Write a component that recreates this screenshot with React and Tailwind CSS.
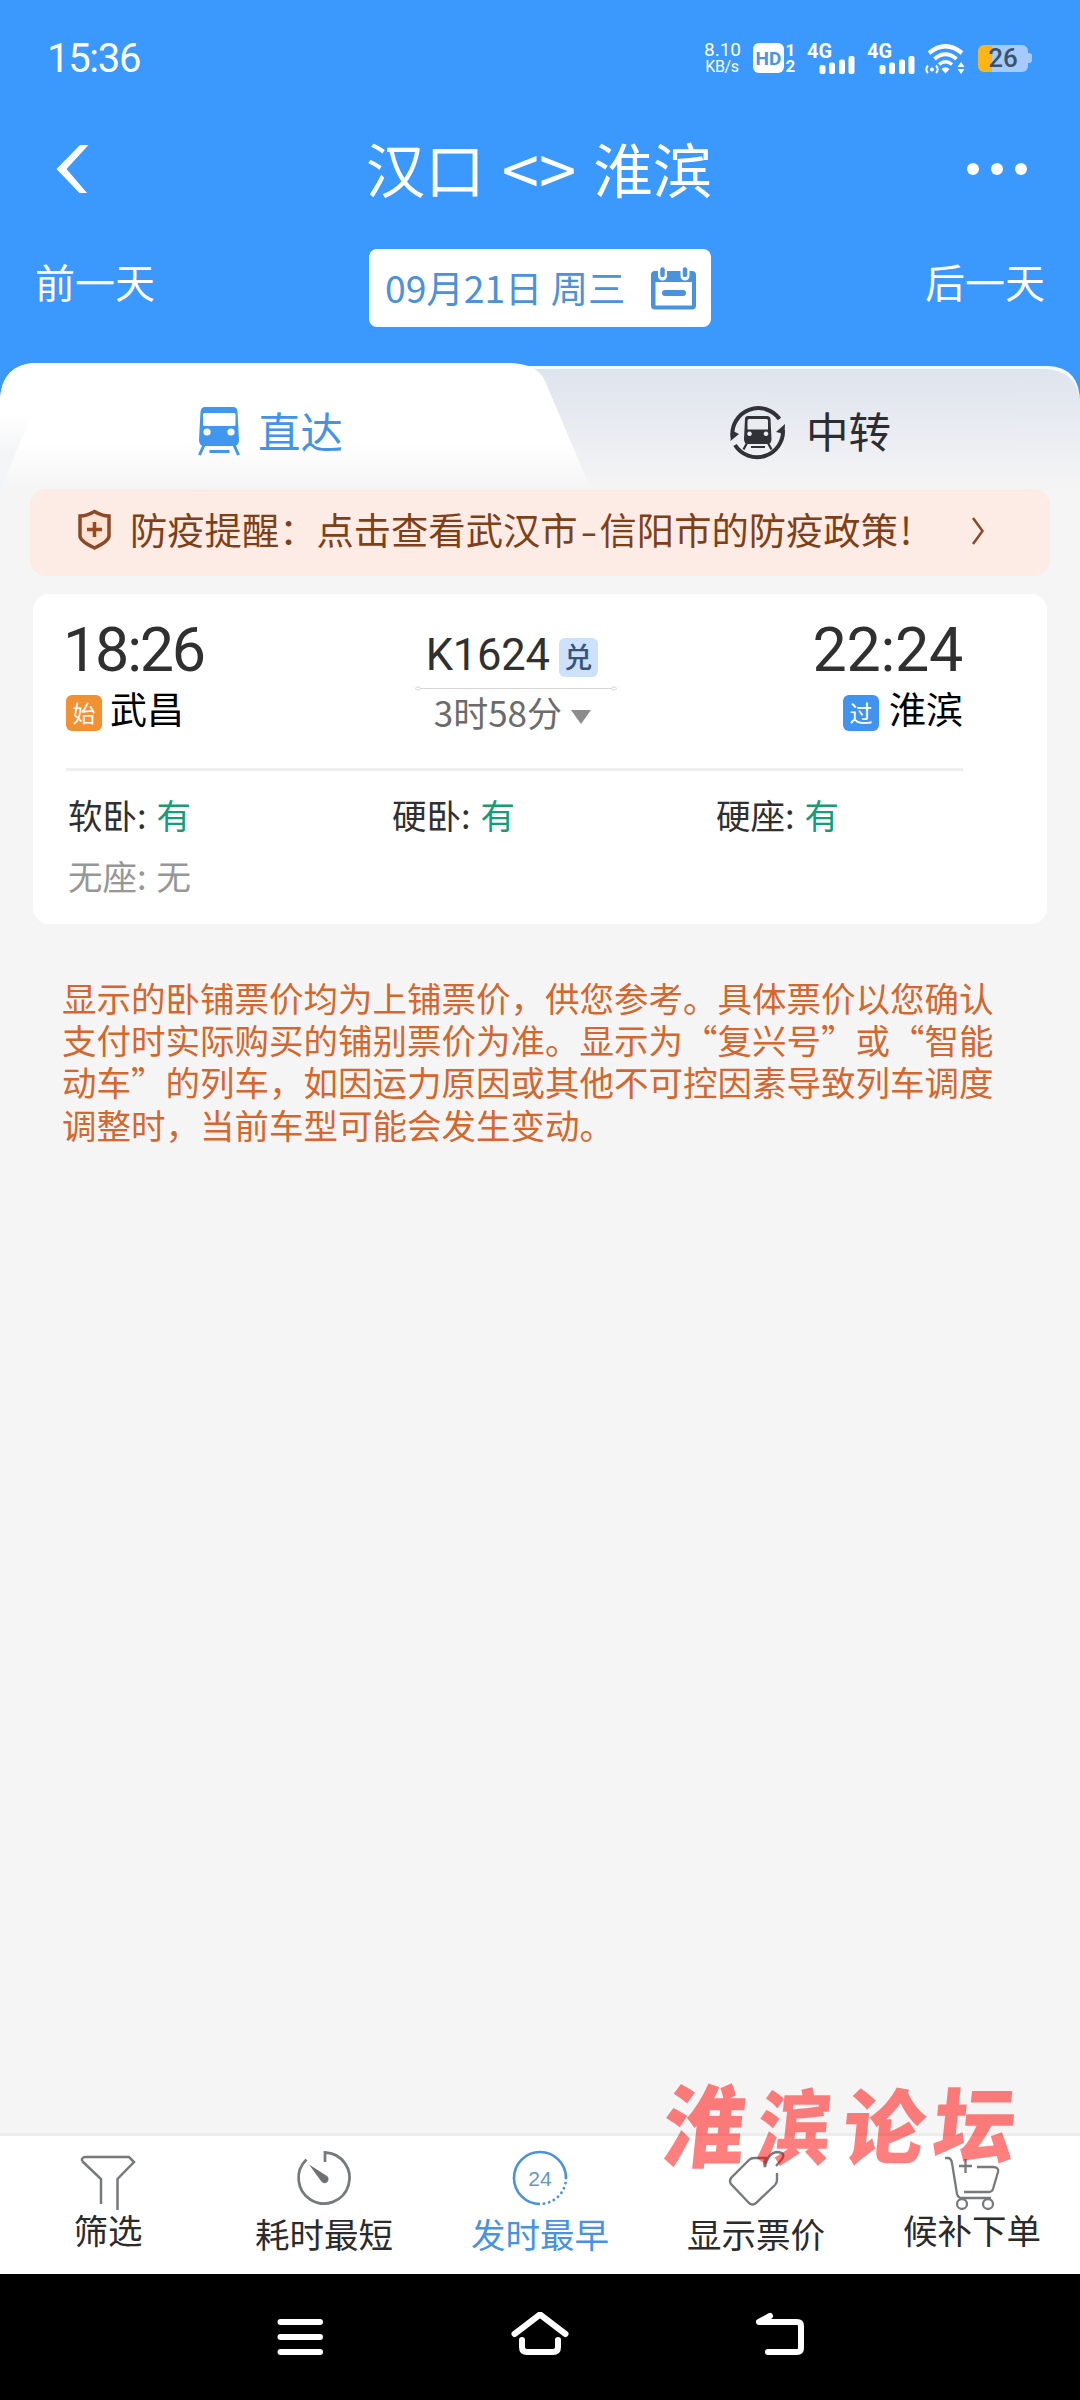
import clsx from "clsx";

const seats = [
  { name: "软卧", left: "有" },
  { name: "硬卧", left: "有" },
  { name: "硬座", left: "有" },
  { name: "无座", left: "无" },
];

const tips = [
  "显示的卧铺票价均为上铺票价，供您参考。具体票价以您确认",
  "支付时实际购买的铺别票价为准。显示为“复兴号”或“智能",
  "动车”的列车，如因运力原因或其他不可控因素导致列车调度",
  "调整时，当前车型可能会发生变动。",
];

const Signal = () => (
  <svg
    className="h-[32px] w-[50px] overflow-visible"
    viewBox="0 0 50 32"
    fill="#fff"
  >
    <text
      x="0"
      y="15.500"
      fontSize="20"
      fontWeight="700"
      fontFamily="Roboto, sans-serif"
      textLength="25"
      lengthAdjust="spacingAndGlyphs"
    >
      4G
    </text>
    <rect x="12.5" y="23" width="6" height="9" rx="2" />
    <rect x="22" y="20.5" width="6" height="11.5" rx="2" />
    <rect x="32" y="17.5" width="6" height="14.5" rx="2" />
    <rect x="41.5" y="14" width="6" height="18" rx="2" />
  </svg>
);

const Wifi = () => (
  <svg
    className="ml-[8px] h-[32px] w-[42px]"
    viewBox="0 0 42 32"
    fill="none"
    stroke="#fff"
  >
    <path d="M4 11 Q20.500 -2.500 37 11" strokeWidth="4.200" />
    <path d="M9.500 17 Q20.500 7.500 31.500 17" strokeWidth="4" />
    <path d="M14 22.500 Q20.500 17 27 22.500" strokeWidth="3.600" />
    <path d="M16.500 27 Q20.500 23.500 24.500 27 L20.500 31.500z" fill="#fff" stroke="none" />
    <circle cx="7" cy="27.500" r="2" fill="#fff" stroke="none" />
    <path d="M3 23.500 Q-0.500 27.500 3 31 M11 23.500 Q14.500 27.500 11 31" strokeWidth="1.900" />
    <path d="M32.500 25 L36 20 L39.500 25z M32.500 27 L36 32 L39.500 27z" fill="#fff" stroke="none" />
  </svg>
);

const StatusBar = () => (
  <div className="flex h-[116px] items-center justify-between pl-[47px] pr-[48px] font-[Roboto,sans-serif] text-white">
    <span className="pt-[1px] text-[40px] leading-none tracking-[-1.300px]">
      15:36
    </span>
    <div className="flex h-[32px] items-center">
      <div className="mr-[13px] w-[36px] text-center">
        <div className="text-[19px] leading-[17px]">8.10</div>
        <div className="text-[16px] leading-[17px] tracking-[-0.300px] whitespace-nowrap">
          KB/s
        </div>
      </div>
      <div className="flex h-[30px] w-[31px] items-center justify-center rounded-[6px] bg-white text-[19px] font-bold leading-none text-[#4a94e0]">
        HD
      </div>
      <div className="ml-[1px] mr-[11px] w-[11px] text-center text-[17px] font-bold">
        <div className="leading-[16px]">1</div>
        <div className="leading-[16px]">2</div>
      </div>
      <Signal />
      <div className="w-[10px]" />
      <Signal />
      <Wifi />
      <div className="ml-[11px] flex h-[27px] w-[50px] items-center justify-center overflow-hidden rounded-[6px] bg-[linear-gradient(to_right,#fdb515_28%,#a6cbfb_28%)] text-[26px] font-medium leading-none text-[#39536f]">
        26
      </div>
      <div className="h-[10px] w-[4px] rounded-r-[3px] bg-[#a6cbfb]" />
    </div>
  </div>
);

const Calendar = () => (
  <svg className="h-[43px] w-[45px]" viewBox="0 0 45 43">
    <rect x="0" y="4" width="45" height="38.500" rx="4" fill="#4b92dd" />
    <rect x="4.500" y="15" width="36.500" height="23.500" fill="#fff" />
    <rect x="11" y="23" width="24" height="6" rx="3" fill="#4b92dd" />
    <path d="M11.500 3v6M34 3v6" stroke="#fff" strokeWidth="9" strokeLinecap="round" />
    <path d="M11.500 2.500v5.500M34 2.500v5.500" stroke="#4b92dd" strokeWidth="4.500" strokeLinecap="round" />
  </svg>
);

const Header = () => (
  <>
    <div className="flex h-[108px] items-center justify-between pb-[3px] pl-[56px] pr-[53px] text-white">
      <svg className="h-[48px] w-[34px]" viewBox="0 0 34 48" fill="#fff">
        <path d="M24 0h8.500L10.500 24l20.500 24h-7.500L0.500 24z" />
      </svg>
      <h1 className="ml-[21px] mt-[-4px] flex text-[59.500px] font-normal leading-[60px]">
        <span>汉口</span>
        <span className="mx-[17px] text-[67px]">&lt;&gt;</span>
        <span>淮滨</span>
      </h1>
      <div className="flex gap-3">
        <span className="size-3 rounded-full bg-white" />
        <span className="size-3 rounded-full bg-white" />
        <span className="size-3 rounded-full bg-white" />
      </div>
    </div>
    <div className="flex h-[139px] items-start justify-between px-[35px] pt-[25px] text-[40px] leading-[65px] text-white">
      <span>前一天</span>
      <div className="flex h-[78px] w-[342px] items-center justify-between rounded-lg bg-white pl-[16px] pr-[15px] text-[37.300px] text-[#4b92d8]">
        <span className="mt-[-2px] whitespace-nowrap">09月21日 周三</span>
        <Calendar />
      </div>
      <span>后一天</span>
    </div>
  </>
);

const TrainIcon = () => (
  <svg className="h-[49px] w-[42px]" viewBox="0 0 42 49">
    <path d="M7 0h28q4.500 0 4.500 5L41 33q0 5-4 6H5q-4-1-4-6L2.500 5Q3 0 7 0z" fill="#4196ee" />
    <rect x="5" y="6" width="32.500" height="13" rx="1.500" fill="#fff" />
    <circle cx="9" cy="25" r="3.600" fill="#fff" />
    <circle cx="33" cy="25" r="3.600" fill="#fff" />
    <path
      d="M6 38L1.500 48M36 38l4.500 10M11.500 44.500h20"
      stroke="#4196ee"
      strokeWidth="3"
      fill="none"
    />
  </svg>
);

const TransferIcon = () => (
  <svg className="h-[57px] w-[56px]" viewBox="0 0 56 57" fill="#303237">
    <path
      d="M2.500 33A26 26 0 0 1 49.500 15M53 26A26 26 0 0 1 5 41"
      fill="none"
      stroke="#303237"
      strokeWidth="4"
    />
    <path d="M0.500 37L1 26l8 4zM55 20L54.500 30l-8.500-2z" />
    <path
      fillRule="evenodd"
      d="M18 12h19q3 0 3.500 3l1 20q0 5-4 5H18q-4 0-4-5l1-20q0-3 3-3zM19 15q-1.500 0-1.500 2v8.500H38V17q0-2-1.500-2zM19.500 27.500a2.300 2.300 0 1 0 .01 0zM36 27.500a2.300 2.300 0 1 0 .01 0z"
    />
    <path
      d="M17 39l-3.500 6.500M38 39l3.500 6.500M21 43h14"
      stroke="#303237"
      strokeWidth="2.200"
    />
  </svg>
);

const Tabs = () => (
  <div className="relative h-[126px] bg-[#f4f4f5]">
    {/* slanted tab shapes behind the labels */}
    <svg
      className="absolute inset-0 h-[126px] w-[1080px]"
      viewBox="0 0 1080 126"
    >
      <defs>
        <linearGradient id="right" x1="0" y1="0" x2="0" y2="1">
          <stop offset="0" stopColor="#dee4ee" />
          <stop offset="0.400" stopColor="#e7eaf0" />
          <stop offset="0.950" stopColor="#f4f4f5" />
        </linearGradient>
        <linearGradient id="left" x1="0" y1="0" x2="0" y2="1">
          <stop offset="0.650" stopColor="#fff" />
          <stop offset="1" stopColor="#f5f5f6" />
        </linearGradient>
        <linearGradient id="edge" x1="0" y1="0" x2="0" y2="1">
          <stop offset="0.400" stopColor="#fff" />
          <stop offset="0.700" stopColor="#f4f5f7" />
        </linearGradient>
      </defs>
      <rect width="1080" height="40" fill="#3b98fc" />
      <path d="M500 3H1048Q1080 4 1080 40V126H500z" fill="#f5fcff" />
      <path d="M500 6H1046Q1078 8 1080 40V126H500z" fill="url(#right)" />
      <path d="M0 126V36Q2 2 34 0H200V126z" fill="url(#edge)" />
      <path
        d="M2 124L31 52L0 36Q2 2 34 0H508Q537 0 545 18L590 124z"
        fill="url(#left)"
      />
    </svg>
    <div className="relative flex h-[136px] items-center text-[42.500px] leading-[50px]">
      <div className="flex w-[540px] items-center gap-[18px] pl-[198px] text-[#4394e6]">
        <TrainIcon />
        <span className="mt-[-3px]">直达</span>
      </div>
      <div className="flex items-center gap-[20px] pl-[190px] pt-[3px] text-[#2b2d31]">
        <TransferIcon />
        <span className="mt-[-5px]">中转</span>
      </div>
    </div>
  </div>
);

const Notice = () => (
  <div className="mx-[30px] flex h-[87px] items-center rounded-[16px] bg-[#fcece5] pb-[5px] pl-[47px] text-[#7f4018]">
    <svg
      className="h-[42px] w-[35px]"
      viewBox="0 0 35 42"
      fill="none"
      stroke="#8a4a28"
      strokeWidth="3.500"
    >
      <path
        d="M17.500 2.500Q10 7 3 7V27Q3 32 17.500 39Q32 32 32 27V7Q25 7 17.500 2.500z"
        fill="#fde3d3"
      />
      <path d="M17.500 13v15M10 20.500h15" stroke="#9a4a20" />
    </svg>
    <p className="ml-[18px] mt-[-2px] flex whitespace-nowrap text-[37.300px] leading-[50px]">
      <span>防疫提醒：点击查看武汉市</span>
      <span className="w-[22px] origin-center scale-x-130 text-center">-</span>
      <span>信阳市的防疫政策</span>
      <span className="ml-[2px]">!</span>
    </p>
    <svg
      className="ml-auto mr-[65px] mt-[2px] h-[28px] w-[14px]"
      viewBox="0 0 14 28"
      fill="none"
      stroke="#8a4a28"
      strokeWidth="2.500"
    >
      <path d="M2 1l9.500 13L2 27" />
    </svg>
  </div>
);

const StationTag = ({ className, children }) => (
  <span
    className={clsx(
      "flex size-9 items-center justify-center rounded-[6px] pb-[2px] text-[23px] leading-none text-white",
      className,
    )}
  >
    {children}
  </span>
);

const TrainCard = () => (
  <div className="mx-[33px] mt-[18px] h-[330px] rounded-[16px] bg-white pl-[33px] pr-[84px] pt-[25px]">
    <div className="flex h-[152px] items-start justify-between border-b-[3px] border-[#efefef]">
      <div>
        <div className="ml-[-3px] font-[Roboto,sans-serif] text-[61px] leading-[62px] tracking-[-2.200px] text-[#303030]">
          18:26
        </div>
        <div className="mt-[3px] flex items-center gap-[8px] text-[37px] leading-[44px] text-black">
          <StationTag className="mt-[11px] bg-[#f29132]">始</StationTag>
          <span>武昌</span>
        </div>
      </div>
      <div className="ml-[15px] w-[202px] pt-[15px]">
        <div className="flex items-center pl-[11px]">
          <span className="w-[125px] font-[Roboto,sans-serif] text-[43.500px] leading-[44px] tracking-[-0.200px] text-[#303030]">
            K1624
          </span>
          <span className="ml-[8px] mt-[2px] flex h-[39px] w-[39px] items-center justify-center rounded-[6px] bg-[#cde1fb] pb-[2px] text-[28px] font-medium leading-none text-[#36557c]">
            兑
          </span>
        </div>
        <svg
          className="mt-[8px] h-[5px] w-[202px]"
          viewBox="0 0 202 5"
          fill="#fff"
          stroke="#d6d6d6"
        >
          <path d="M5 2.500h192" />
          <ellipse cx="3" cy="2.500" rx="2.500" ry="1.500" />
          <ellipse cx="199" cy="2.500" rx="2.500" ry="1.500" />
        </svg>
        <div className="mt-[-1px] flex items-center pl-[19px] text-[35px] leading-[44px] text-[#6b6b6b]">
          <span>3时58分</span>
          <svg className="ml-[8px] mt-[10px] h-[14px] w-[22px]" viewBox="0 0 22 14">
            <path d="M1 0h20L11 14z" fill="#8c8c8c" />
          </svg>
        </div>
      </div>
      <div className="flex flex-col items-end">
        <div className="font-[Roboto,sans-serif] text-[61px] leading-[62px] tracking-[-0.300px] text-[#303030]">
          22:24
        </div>
        <div className="mt-[3px] flex items-center gap-[10px] text-[37px] leading-[44px] text-black">
          <StationTag className="mt-[11px] bg-[#4093ee]">过</StationTag>
          <span>淮滨</span>
        </div>
      </div>
    </div>
    <div className="mr-[-76px] grid grid-cols-[324px_324px_1fr] pl-[2px] pt-[13px] text-[34.500px] leading-[61px]">
      {seats.map((seat) => (
        <div
          key={seat.name}
          className={seat.left === "无" ? "text-[#979797]" : "text-[#303030]"}
        >
          {seat.name}:
          <span
            className={clsx("ml-[10px]", seat.left === "有" && "text-[#149d78]")}
          >
            {seat.left}
          </span>
        </div>
      ))}
    </div>
  </div>
);

const FilterIcon = () => (
  <path d="M1 10V8Q2 6 4 6H48L53 11L36.500 28V59M1 10L20 28V53" strokeWidth="2.500" />
);

const TimerIcon = () => (
  <>
    <path d="M28 11V1.500A25.500 25.500 0 1 1 9.500 8.500" strokeWidth="2.800" />
    <path d="M12 13.500L30 25A4 4 0 1 1 24 30z" fill="#6f7173" stroke="none" />
  </>
);

const ClockIcon = () => (
  <>
    <path d="M27 53A26 26 0 1 1 53 27" stroke="#4b92dd" strokeWidth="2.600" />
    <path
      d="M53 27A26 26 0 0 1 27 53"
      stroke="#4b92dd"
      strokeWidth="2.800"
      strokeDasharray="0.100 5.100"
      strokeLinecap="round"
    />
    <text
      x="27"
      y="34.500"
      textAnchor="middle"
      fontSize="21"
      fontFamily="Liberation Sans, sans-serif"
      fill="#5f97d0"
      stroke="none"
    >
      24
    </text>
  </>
);

const PriceIcon = () => (
  <path
    d="M36 16Q34 10 38 7H25Q22 7 20 9L2 27Q0 30 2 33L20 52Q23.500 55 27 52L46 34Q48 32 48 29V22M36 16Q39 1 49 1Q57 2 53 8L47 15"
    strokeWidth="2.400"
  />
);

const CartIcon = () => (
  <g strokeWidth="2.300">
    <path d="M0 7H3Q6 7 7 12L12 43Q13 47 17 47H46M32 16H48Q54 16 53 21L48 38Q47 41 44 41H19M14 15H27M20.500 8V22" />
    <circle cx="17" cy="53" r="5" />
    <circle cx="43" cy="53" r="5" />
  </g>
);

const actions = [
  { label: "筛选", Icon: FilterIcon, low: true },
  { label: "耗时最短", Icon: TimerIcon },
  { label: "发时最早", Icon: ClockIcon, active: true },
  { label: "显示票价", Icon: PriceIcon },
  { label: "候补下单", Icon: CartIcon, low: true },
];

const BottomBar = () => (
  <div className="relative grid h-[141px] grid-cols-5 border-t-[3px] border-[#ececec] bg-white">
    {actions.map(({ label, Icon, active, low }) => (
      <div key={label} className="flex flex-col items-center pt-[15px]">
        <svg
          className="h-[54px] w-[54px] overflow-visible"
          viewBox="0 0 54 54"
          fill="none"
          stroke="#777a7d"
        >
          <Icon />
        </svg>
        <span
          className={clsx(
            "text-[34.500px] leading-[50px]",
            active ? "text-[#4793df]" : "text-[#2b2b2b]",
            low ? "mt-[-1px]" : "mt-[3px]",
          )}
        >
          {label}
        </span>
      </div>
    ))}
    {/* forum watermark lies over the bar */}
    <div className="absolute left-[664px] top-[-58px] flex -skew-x-6 gap-[8px] whitespace-nowrap text-[82px] font-black leading-[90px] text-[#ff0000]/50">
      <span className="-translate-y-[2px] scale-y-110">淮</span>
      <span className="scale-x-90">滨</span>
      <span>论</span>
      <span className="-translate-y-[2px]">坛</span>
    </div>
  </div>
);

const NavBar = () => (
  <div className="flex h-[126px] items-center justify-center gap-[182px] bg-black">
    <svg className="h-[50px] w-[58px]" viewBox="0 0 58 50" fill="none" stroke="#fff" strokeWidth="6" strokeLinecap="round">
      <path d="M9.500 10h39.500M9.500 25h39.500M9.500 40h39.500" />
    </svg>
    <svg className="h-[50px] w-[58px]" viewBox="0 0 58 50" fill="none" stroke="#fff" strokeWidth="6" strokeLinecap="round" strokeLinejoin="round">
      <path d="M3.500 22L29 2.500L54.500 22M11 28V35Q11 40 16 40H42Q47 40 47 35V28" />
    </svg>
    <svg className="h-[50px] w-[58px]" viewBox="0 0 58 50" fill="none" stroke="#fff" strokeWidth="6" strokeLinecap="round" strokeLinejoin="round">
      <path d="M19 4L8 10H46Q50 10 50 14V36Q50 40 46 40H17" />
    </svg>
  </div>
);

const App = () => (
  <div
    lang="zh-CN"
    className="flex h-[2400px] w-[1080px] flex-col overflow-hidden bg-[#f5f5f5] font-['Noto_Sans_CJK_SC',sans-serif]"
  >
    <div className="bg-[#3b98fc]">
      <StatusBar />
      <Header />
    </div>
    <Tabs />
    <Notice />
    <TrainCard />
    <div className="ml-[62px] mt-[52px] whitespace-nowrap text-[34.500px] leading-[42.200px] text-[#d5662c]">
      {tips.map((line) => (
        <p key={line}>{line}</p>
      ))}
    </div>
    <div className="flex-1" />
    <BottomBar />
    <NavBar />
  </div>
);

export default App;
